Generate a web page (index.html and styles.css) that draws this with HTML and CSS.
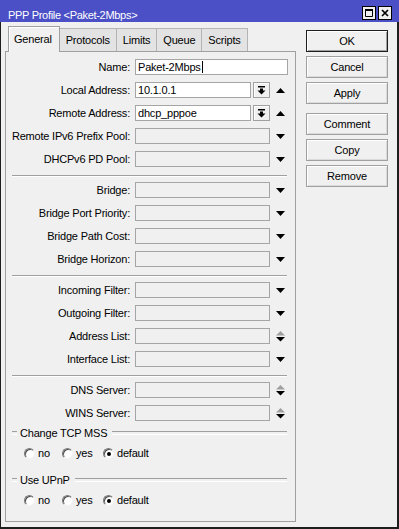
FILE: index.html
```html
<!DOCTYPE html>
<html lang="en">
<head>
    <meta charset="UTF-8">
    <meta name="viewport" content="width=device-width, initial-scale=1.0">
    <title>PPP Profile &lt;Paket-2Mbps&gt;</title>
    <link rel="stylesheet" href="styles.css">
</head>
<body>
    <div class="window">
        <!-- Title bar -->
        <div class="titlebar">
            <span class="title">PPP Profile &lt;Paket-2Mbps&gt;</span>
            <div class="title-btns">
                <svg width="14" height="14" viewBox="0 0 14 14"><rect x="0.5" y="0.5" width="13" height="13" fill="#f0f0f0" stroke="#000"/><path d="M3.5 3.5h7v7h-7z" fill="none" stroke="#000"/><path d="M3 3h8v2H3z"/></svg>
                <svg width="14" height="14" viewBox="0 0 14 14"><rect x="0.5" y="0.5" width="13" height="13" fill="#f0f0f0" stroke="#000"/><path d="M4 4l6 6M10 4l-6 6" stroke="#000" stroke-width="1.7"/></svg>
            </div>
        </div>

        <div class="frame">
            <!-- Tabs + panel -->
            <div class="left">
                <div class="tabs">
                    <div class="tab active">General</div>
                    <div class="tab">Protocols</div>
                    <div class="tab">Limits</div>
                    <div class="tab">Queue</div>
                    <div class="tab">Scripts</div>
                </div>

                <div class="panel">
                    <div class="section">
                        <div class="row">
                            <label>Name:</label>
                            <div class="input white wide">Paket-2Mbps<span class="caret"></span></div>
                        </div>
                        <div class="row">
                            <label>Local Address:</label>
                            <div class="combo">
                                <div class="input white">10.1.0.1</div>
                                <span class="spin"><svg width="9" height="9" viewBox="0 0 9 9"><path d="M1 0h7v1.5H1zM3 2.5h3v2.5H3zM0.5 4.5h8L4.5 8.5z"/></svg></span>
                            </div>
                            <span class="arrow"><svg width="9" height="5" viewBox="0 0 9 5"><path d="M0 5h9L4.5 0z"/></svg></span>
                        </div>
                        <div class="row">
                            <label>Remote Address:</label>
                            <div class="combo">
                                <div class="input white">dhcp_pppoe</div>
                                <span class="spin"><svg width="9" height="9" viewBox="0 0 9 9"><path d="M1 0h7v1.5H1zM3 2.5h3v2.5H3zM0.5 4.5h8L4.5 8.5z"/></svg></span>
                            </div>
                            <span class="arrow"><svg width="9" height="5" viewBox="0 0 9 5"><path d="M0 5h9L4.5 0z"/></svg></span>
                        </div>
                        <div class="row">
                            <label>Remote IPv6 Prefix Pool:</label>
                            <div class="input"></div>
                            <span class="arrow"><svg width="9" height="5" viewBox="0 0 9 5"><path d="M0 0h9L4.5 5z"/></svg></span>
                        </div>
                        <div class="row">
                            <label>DHCPv6 PD Pool:</label>
                            <div class="input"></div>
                            <span class="arrow"><svg width="9" height="5" viewBox="0 0 9 5"><path d="M0 0h9L4.5 5z"/></svg></span>
                        </div>
                    </div>

                    <div class="sep"></div>

                    <div class="section">
                        <div class="row">
                            <label>Bridge:</label>
                            <div class="input"></div>
                            <span class="arrow"><svg width="9" height="5" viewBox="0 0 9 5"><path d="M0 0h9L4.5 5z"/></svg></span>
                        </div>
                        <div class="row">
                            <label>Bridge Port Priority:</label>
                            <div class="input"></div>
                            <span class="arrow"><svg width="9" height="5" viewBox="0 0 9 5"><path d="M0 0h9L4.5 5z"/></svg></span>
                        </div>
                        <div class="row">
                            <label>Bridge Path Cost:</label>
                            <div class="input"></div>
                            <span class="arrow"><svg width="9" height="5" viewBox="0 0 9 5"><path d="M0 0h9L4.5 5z"/></svg></span>
                        </div>
                        <div class="row">
                            <label>Bridge Horizon:</label>
                            <div class="input"></div>
                            <span class="arrow"><svg width="9" height="5" viewBox="0 0 9 5"><path d="M0 0h9L4.5 5z"/></svg></span>
                        </div>
                    </div>

                    <div class="sep"></div>

                    <div class="section">
                        <div class="row">
                            <label>Incoming Filter:</label>
                            <div class="input"></div>
                            <span class="arrow"><svg width="9" height="5" viewBox="0 0 9 5"><path d="M0 0h9L4.5 5z"/></svg></span>
                        </div>
                        <div class="row">
                            <label>Outgoing Filter:</label>
                            <div class="input"></div>
                            <span class="arrow"><svg width="9" height="5" viewBox="0 0 9 5"><path d="M0 0h9L4.5 5z"/></svg></span>
                        </div>
                        <div class="row">
                            <label>Address List:</label>
                            <div class="input"></div>
                            <span class="arrow"><svg width="9" height="11" viewBox="0 0 9 11"><path d="M0 4.5h9L4.5 0z" fill="#a0a0a0"/><path d="M0 6h9L4.5 10.5z"/></svg></span>
                        </div>
                        <div class="row">
                            <label>Interface List:</label>
                            <div class="input"></div>
                            <span class="arrow"><svg width="9" height="5" viewBox="0 0 9 5"><path d="M0 0h9L4.5 5z"/></svg></span>
                        </div>
                    </div>

                    <div class="sep"></div>

                    <div class="section">
                        <div class="row">
                            <label>DNS Server:</label>
                            <div class="input"></div>
                            <span class="arrow"><svg width="9" height="11" viewBox="0 0 9 11"><path d="M0 4.5h9L4.5 0z" fill="#a0a0a0"/><path d="M0 6h9L4.5 10.5z"/></svg></span>
                        </div>
                        <div class="row">
                            <label>WINS Server:</label>
                            <div class="input"></div>
                            <span class="arrow"><svg width="9" height="11" viewBox="0 0 9 11"><path d="M0 4.5h9L4.5 0z" fill="#a0a0a0"/><path d="M0 6h9L4.5 10.5z"/></svg></span>
                        </div>
                    </div>

                    <div class="group"><span>Change TCP MSS</span></div>
                    <div class="radios">
                        <div class="opt"><span class="radio"></span>no</div>
                        <div class="opt"><span class="radio"></span>yes</div>
                        <div class="opt"><span class="radio checked"></span>default</div>
                    </div>

                    <div class="group second"><span>Use UPnP</span></div>
                    <div class="radios">
                        <div class="opt"><span class="radio"></span>no</div>
                        <div class="opt"><span class="radio"></span>yes</div>
                        <div class="opt"><span class="radio checked"></span>default</div>
                    </div>
                </div>
            </div>

            <!-- Action buttons -->
            <div class="buttons">
                <div class="btn default">OK</div>
                <div class="btn">Cancel</div>
                <div class="btn">Apply</div>
                <div class="btn spaced">Comment</div>
                <div class="btn">Copy</div>
                <div class="btn">Remove</div>
            </div>
        </div>
    </div>
</body>
</html>
```

FILE: styles.css
```css
* {
    margin: 0;
    padding: 0;
    box-sizing: border-box;
}

body {
    font-family: 'Liberation Sans', Arial, sans-serif;
    font-size: 11px;
    letter-spacing: -0.2px;
    color: #000;
    background: #f0f0f0;
}

.window {
    width: 399px;
    height: 529px;
    display: flex;
    flex-direction: column;
    background: #f0f0f0;
}

/* Title bar */
.titlebar {
    height: 22px;
    background: #4b50c6;
    color: #fff;
    display: flex;
    justify-content: space-between;
    align-items: flex-start;
    padding: 0 7px 0 8px;
}

.title {
    margin-top: 8px;
    line-height: 14px;
    letter-spacing: -0.3px;
}

.title-btns {
    display: flex;
    gap: 2px;
    margin-top: 6px;
}

.title-btns svg {
    display: block;
}

/* Window body */
.frame {
    flex: 1;
    display: flex;
    border-left: 1px solid #1e1e1e;
    border-right: 2px solid #1e1e1e;
    border-bottom: 2px solid #1e1e1e;
    padding: 4px 0 0 4px;
}

.left {
    width: 291px;
    display: flex;
    flex-direction: column;
    margin-bottom: 5px;
}

.tabs {
    height: 25px;
    display: flex;
    align-items: flex-end;
    padding-left: 3px;
}

.tab {
    height: 23px;
    line-height: 22px;
    padding: 0 6px;
    background: #e3e3e3;
    border: 1px solid #b4b4b4;
    border-bottom: none;
    margin-left: -1px;
}

.tab.active {
    position: relative;
    z-index: 1;
    height: 26px;
    line-height: 25px;
    margin-bottom: -1px;
    margin-left: 0;
    padding: 0 7px 0 5px;
    background: #f0f0f0;
    border-color: #a0a0a0;
    box-shadow: inset 1px 1px #fff;
}

.panel {
    flex: 1;
    border: 1px solid #a0a0a0;
    padding-top: 7px;
}

.section {
    display: flex;
    flex-direction: column;
    gap: 7px;
}

.row {
    display: grid;
    grid-template-columns: 124px 135px auto;
    column-gap: 5px;
    height: 16px;
    align-items: center;
}

.row label {
    text-align: right;
    line-height: 16px;
    white-space: nowrap;
}

.input {
    height: 16px;
    line-height: 14px;
    padding-left: 2px;
    border: 1px solid #a5a5a5;
    background: #f0f0f0;
    white-space: nowrap;
}

.input.white {
    background: #fff;
}

.input.wide {
    grid-column: 2 / 4;
    width: 153px;
}

.caret {
    display: inline-block;
    width: 1px;
    height: 12px;
    margin-left: 1px;
    background: #000;
    vertical-align: -2px;
}

.combo {
    display: flex;
    gap: 2px;
}

.combo .input {
    width: 116px;
}

.spin {
    width: 17px;
    height: 16px;
    border: 1px solid #a0a0a0;
    background: #f0f0f0;
    box-shadow: inset 1px 1px #fff;
    display: flex;
    align-items: center;
    justify-content: center;
}

.spin svg,
.arrow svg {
    display: block;
}

.arrow {
    height: 16px;
    margin-left: 1px;
    display: flex;
    align-items: center;
}

.sep {
    height: 2px;
    border-top: 1px solid #a0a0a0;
    border-bottom: 1px solid #fff;
    margin: 8px 8px 5px 6px;
}

/* Group headers */
.group {
    height: 14px;
    display: flex;
    align-items: center;
    margin: 5px 8px 0 6px;
}

.group.second {
    margin-top: 13px;
}

.group::before,
.group::after {
    content: '';
    height: 2px;
    border-top: 1px solid #a0a0a0;
    border-bottom: 1px solid #fff;
}

.group::before {
    width: 5px;
}

.group::after {
    flex: 1;
    margin-left: 5px;
}

.group span {
    margin-left: 3px;
    line-height: 14px;
}

.radios {
    height: 13px;
    margin-top: 7px;
    padding-left: 18px;
    display: grid;
    grid-template-columns: 38px 41px auto;
    align-items: center;
}

.opt {
    display: flex;
    align-items: center;
    gap: 3px;
    line-height: 13px;
}

.radio {
    position: relative;
    width: 11px;
    height: 11px;
    border-radius: 50%;
    background: #fff;
    border: 1px solid;
    border-color: #7a7a7a #f4f4f4 #f4f4f4 #7a7a7a;
    box-shadow: inset 1px 1px #505050;
}

.radio.checked::after {
    content: '';
    position: absolute;
    left: 3px;
    top: 3px;
    width: 4px;
    height: 4px;
    border-radius: 50%;
    background: #000;
}

/* Right-hand buttons */
.buttons {
    width: 82px;
    margin: 4px 0 0 10px;
    display: flex;
    flex-direction: column;
    gap: 4px;
}

.btn {
    height: 22px;
    line-height: 20px;
    text-align: center;
    border: 1px solid #a0a0a0;
    background: #f0f0f0;
    box-shadow: inset 1px 1px #fff, inset -1px -1px #dadada;
}

.btn.default {
    border-color: #1e1e1e;
    box-shadow: inset 1px 1px #fff, inset -1px -1px #a0a0a0;
}

.btn.spaced {
    margin-top: 5px;
}
```
